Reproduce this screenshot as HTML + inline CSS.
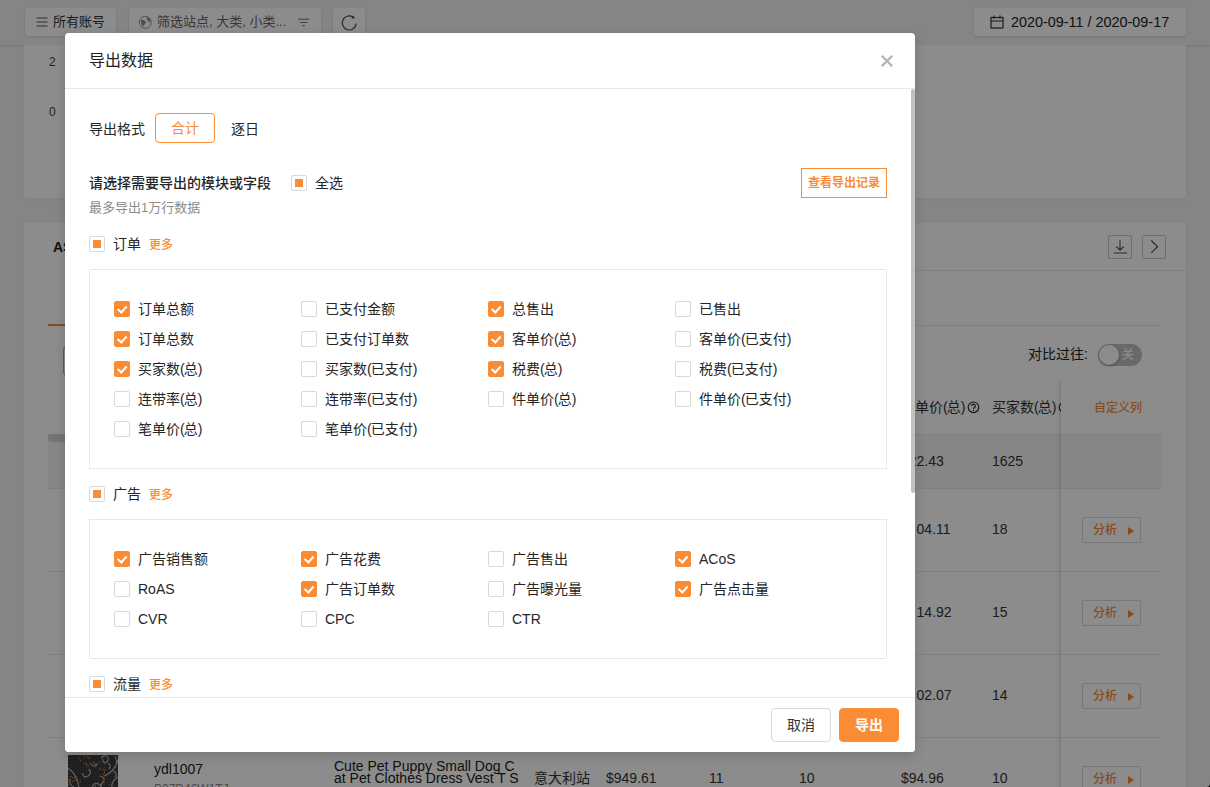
<!DOCTYPE html>
<html lang="zh-CN">
<head>
<meta charset="utf-8">
<title>导出数据</title>
<style>
*{box-sizing:border-box;margin:0;padding:0}
html,body{width:1210px;height:787px;overflow:hidden;background:#f0f2f5}
body{font-family:"Liberation Sans","Noto Sans CJK SC",sans-serif;font-size:14px;color:#333;position:relative;line-height:1}
.abs{position:absolute}
.t{position:absolute;white-space:nowrap;line-height:20px;height:20px}
/* background page */
#page{position:absolute;left:0;top:0;width:1210px;height:787px;overflow:hidden;background:#f0f2f5}
.topbar{position:absolute;left:0;top:0;width:1210px;height:45px;background:#f0f2f5;box-shadow:0 1px 2px rgba(0,0,0,.12)}
.btn{position:absolute;border-radius:3px;background:#fff;height:28px;line-height:28.5px;white-space:nowrap;font-size:13px;color:#333;box-shadow:0 1px 3px rgba(0,0,0,.12)}
.card{position:absolute;background:#fff;border-radius:2px;box-shadow:0 1px 3px rgba(0,0,0,.06)}
.hline{position:absolute;height:1px;background:#e8e8e8}
.ana{position:absolute;left:1082px;width:59px;height:26px;border:1px solid #d9d9d9;border-radius:2px;color:#f98a2f;font-size:12px;font-weight:500;line-height:24px;padding-left:10px;background:#fff}
.ana i{position:absolute;left:45px;top:8.5px;width:0;height:0;border-left:6px solid #f98a2f;border-top:4px solid transparent;border-bottom:4px solid transparent}
/* mask */
#mask{position:absolute;left:0;top:0;width:1210px;height:787px;background:rgba(0,0,0,.45)}
/* modal */
#modal{position:absolute;left:65px;top:33px;width:850px;height:719px;background:#fff;border-radius:4px;box-shadow:0 4px 12px rgba(0,0,0,.15);overflow:hidden}
#modal .t{color:#262626}
.cb{position:absolute;width:16px;height:16px;border:1px solid #d9d9d9;border-radius:2px;background:#fff}
.cb.on{background:#fa8c35;border-color:#fa8c35}
.cb.on:after{content:"";position:absolute;left:4.2px;top:1.8px;width:4.2px;height:7.4px;border:2px solid #fff;border-top:0;border-left:0;transform:rotate(42deg)}
.cb.ind:after{content:"";position:absolute;left:3px;top:3px;width:8px;height:8px;background:#fa8c35}
.pn{letter-spacing:-1px}
.more{color:#fa8c35;font-size:12px}
.box{position:absolute;left:24px;width:798px;border:1px solid #e8e8e8}
</style>
</head>
<body>
<div id="page">
<div class="topbar"></div>
<div class="btn" style="left:25px;top:8px;width:91px;padding-left:28px">所有账号<svg class="abs" style="left:11.400px;top:8.400px" width="12" height="12" viewBox="0 0 12 12"><path d="M0.5 2h11M0.5 6h11M0.5 10h11" stroke="#555" stroke-width="1" fill="none"/></svg></div>
<div class="btn" style="left:129px;top:8px;width:192px;padding-left:28px;color:#666">筛选站点, 大类, 小类...<svg class="abs" style="left:9px;top:7px" width="15" height="15" viewBox="0 0 15 15"><circle cx="7.300" cy="7.300" r="6" stroke="#999" stroke-width="1" fill="none"/><path d="M2.800 5.500c1.500-.8 3.500-.3 4.500.8s.5 2.200-.3 2.700-1.200 1.500-1.700 2.300C4 10.500 2.500 8 2.800 5.500z" fill="#8a8a8a"/><path d="M8.500 2c1.500.2 3.200 1.500 3.800 3.300-.3 1.400-.8 2.400-1.300 2.600-.3-1.800-1.500-2.300-2-3.500-.3-.8-.5-1.600-.5-2.400z" fill="#999"/><circle cx="6" cy="8.200" r=".8" fill="#fa8c35"/></svg><svg class="abs" style="left:169px;top:8px" width="12" height="12" viewBox="0 0 12 12"><path d="M0 3.200h11.300M2 6.500h7.500M4 9.600h3" stroke="#777" stroke-width="1" fill="none"/></svg></div>
<div class="btn" style="left:333px;top:8px;width:32px"><svg class="abs" style="left:7px;top:5.600px" width="18" height="18" viewBox="0 0 18 18"><path d="M16.200 9.600a7 7 0 1 1-3.200-6.500" stroke="#4a4a4a" stroke-width="1.200" fill="none"/><path d="M13.200 1.200l1.600 3.200-3.300.1z" fill="#4a4a4a"/></svg></div>
<div class="btn" style="left:974px;top:8px;width:212px;padding-left:37px;color:#222;font-size:14.400px">2020-09-11 / 2020-09-17<svg class="abs" style="left:16px;top:7px" width="14" height="14" viewBox="0 0 14 14"><rect x="1" y="2.500" width="12" height="10.500" stroke="#333" stroke-width="1.200" fill="none"/><path d="M1 6h12M4 0.500v3M10 0.500v3" stroke="#333" stroke-width="1.200" fill="none"/></svg></div>
<div class="card" style="left:24px;top:45px;width:1162px;height:153px"></div>
<div class="t" style="left:49px;top:52px;font-size:12px;color:#444">2</div>
<div class="t" style="left:49px;top:102px;font-size:12px;color:#444">0</div>
<div class="card" style="left:24px;top:223px;width:1162px;height:600px"></div>
<div class="t" style="left:53px;top:237px;font-weight:bold;font-size:14px;color:#222">ASIN</div>
<div class="hline" style="left:100px;top:270px;width:1085px"></div>
<div class="abs" style="left:1108px;top:235px;width:24px;height:24px;border:1px solid #c8c8c8;border-radius:2px"><svg width="22" height="22" viewBox="0 0 22 22"><path d="M11 4v10M7.300 10.500l3.700 3.700 3.700-3.700M4.500 17h13.500" stroke="#505050" stroke-width="1.100" fill="none"/></svg></div>
<div class="abs" style="left:1142px;top:235px;width:24px;height:24px;border:1px solid #c8c8c8;border-radius:2px"><svg width="22" height="22" viewBox="0 0 22 22"><path d="M8.300 4.500l6.200 6.200-6.200 6.200" stroke="#505050" stroke-width="1.200" fill="none"/></svg></div>
<div class="hline" style="left:48px;top:325px;width:1114px"></div>
<div class="abs" style="left:48px;top:324px;width:60px;height:2px;background:#fa8c35"></div>
<div class="abs" style="left:63px;top:346px;width:80px;height:30px;border:1px solid #fa8c35;border-radius:4px"></div>
<div class="t" style="left:1028px;top:344px;color:#222">对比过往:</div>
<div class="abs" style="left:1098px;top:344px;width:44px;height:22px;border-radius:11px;background:#bfbfbf"><span class="abs" style="left:1px;top:1px;width:20px;height:20px;border-radius:10px;background:#fff;box-shadow:0 1px 3px rgba(0,0,0,.3)"></span><span class="abs" style="left:24px;top:4px;font-size:12px;color:#fff;line-height:14px;font-weight:500">关</span></div>
<div class="abs" style="left:48px;top:434px;width:1114px;height:54px;background:#f5f5f5"></div>
<div class="hline" style="left:48px;top:434px;width:1114px"></div>
<div class="hline" style="left:48px;top:488px;width:1114px"></div>
<div class="hline" style="left:48px;top:571px;width:1114px"></div>
<div class="hline" style="left:48px;top:654px;width:1114px"></div>
<div class="hline" style="left:48px;top:737px;width:1114px"></div>
<div class="abs" style="left:48px;top:434px;width:60px;height:8px;background:#d4d4d4;border-radius:4px"></div>
<div class="t" style="left:901px;top:397px;color:#333">客单价<span class="pn">(</span>总<span class="pn">)</span></div>
<svg class="abs" style="left:967px;top:401px" width="13" height="13" viewBox="0 0 13 13"><circle cx="6.500" cy="6.300" r="5.300" stroke="#333" stroke-width="1.200" fill="none"/><path d="M4.700 5a1.800 1.800 0 1 1 2.600 1.600c-.6.300-.8.600-.8 1.300" stroke="#333" stroke-width="1.200" fill="none"/><circle cx="6.500" cy="9.500" r=".7" fill="#333"/></svg>
<div class="t" style="left:992px;top:397px;color:#333">买家数<span class="pn">(</span>总<span class="pn">)</span></div>
<svg class="abs" style="left:1058px;top:401px" width="13" height="13" viewBox="0 0 13 13"><circle cx="6.500" cy="6.300" r="5.300" stroke="#333" stroke-width="1.200" fill="none"/></svg>
<div class="t" style="left:901px;top:451px;">$22.43</div>
<div class="t" style="left:992px;top:451px;">1625</div>
<div class="t" style="left:901px;top:519px;width:13px;overflow:hidden">$1</div>
<div class="t" style="left:916.57px;top:519px;">04.11</div>
<div class="t" style="left:992px;top:519px;">18</div>
<div class="t" style="left:901px;top:602px;width:13px;overflow:hidden">$1</div>
<div class="t" style="left:916.57px;top:602px;">14.92</div>
<div class="t" style="left:992px;top:602px;">15</div>
<div class="t" style="left:901px;top:685px;width:13px;overflow:hidden">$1</div>
<div class="t" style="left:916.57px;top:685px;">02.07</div>
<div class="t" style="left:992px;top:685px;">14</div>
<div class="t" style="left:901px;top:768px;">$94.96</div>
<div class="t" style="left:992px;top:768px;">10</div>
<div class="abs" style="left:68px;top:755px;width:50px;height:40px;background:#353535"><svg width="50" height="40" viewBox="0 0 50 40"><defs><pattern id="dots" width="3" height="3" patternUnits="userSpaceOnUse"><rect x="0" y="0" width="1" height="1" fill="#555"/><rect x="1.500" y="1.500" width="1" height="1" fill="#4a4a4a"/></pattern></defs><rect width="50" height="40" fill="url(#dots)"/><g stroke="#adadad" stroke-width="1.250" fill="none"><path d="M0 13c6 4 10 10 11 20M33 3c3-4 8-2 7 2s-6 3-5-1M15 18c-1 3 2 5 5 3s3-5 1-7M50 5c-2 8-8 14-14 16M47 1c2 4 2 8 0 12M32 21c4 0 5 4 3 6s-3 8-2 13M24 32c3-6 10-4 9 3M50 22c-5 2-7 8-6 14M2 24c-1 4 1 7 4 8M45 16c3 0 4 4 2 6M22 8c2 3 5 4 7 2M40 8c2 1 3 4 1 6"/></g><g fill="#d0803a"><circle cx="16.200" cy="1.400" r=".7"/><circle cx="11.300" cy="3.400" r=".7"/><circle cx="12.300" cy="5.400" r=".7"/><circle cx="19.500" cy="2.300" r=".7"/><circle cx="20.500" cy="3.600" r=".7"/><circle cx="21.500" cy="2.300" r=".7"/><circle cx="16.300" cy="8.400" r=".7"/><circle cx="18.300" cy="8.400" r=".7"/><circle cx="19.300" cy="9.600" r=".7"/><circle cx="18.300" cy="10.600" r=".7"/><circle cx="20.300" cy="11.400" r=".7"/><circle cx="25.300" cy="7.300" r=".7"/><circle cx="26.500" cy="8.500" r=".7"/><circle cx="27.500" cy="9.500" r=".7"/><circle cx="28.500" cy="8.500" r=".7"/><circle cx="29.500" cy="9.500" r=".7"/><circle cx="31.500" cy="7.300" r=".7"/><circle cx="35.300" cy="7.300" r=".7"/><circle cx="36.500" cy="9.300" r=".7"/><circle cx="41.400" cy="10.400" r=".7"/><circle cx="32.400" cy="13.400" r=".7"/><circle cx="31.400" cy="14.500" r=".7"/><circle cx="35.400" cy="14.400" r=".7"/><circle cx="36.500" cy="15.500" r=".7"/><circle cx="37.500" cy="14.400" r=".7"/><circle cx="36.500" cy="17.500" r=".7"/><circle cx="35.500" cy="19.500" r=".7"/><circle cx="20.400" cy="15.400" r=".7"/><circle cx="22.400" cy="18.400" r=".7"/><circle cx="2.400" cy="21.400" r=".7"/><circle cx="4.400" cy="22.400" r=".7"/><circle cx="6.400" cy="22.400" r=".7"/><circle cx="8.400" cy="22.400" r=".7"/><circle cx="6.400" cy="25.400" r=".7"/><circle cx="8.400" cy="25.400" r=".7"/><circle cx="4.400" cy="26.400" r=".7"/><circle cx="12.400" cy="26.400" r=".7"/><circle cx="36.400" cy="27.400" r=".7"/><circle cx="41.400" cy="29.400" r=".7"/><circle cx="43.400" cy="29.400" r=".7"/><circle cx="44.400" cy="27.400" r=".7"/><circle cx="0.600" cy="29.400" r=".7"/><circle cx="10.400" cy="30.400" r=".7"/><circle cx="27.400" cy="31.400" r=".7"/></g></svg></div>
<div class="t" style="left:154px;top:759px;color:#222">ydl1007</div>
<div class="t" style="left:154px;top:779px;font-size:12px;color:#888">B07D46W1TJ</div>
<div class="t" style="left:334px;top:758.5px;color:#222;line-height:14px">Cute Pet Puppy Small Dog C</div>
<div class="t" style="left:334px;top:771px;color:#222;line-height:14px">at Pet Clothes Dress Vest T S</div>
<div class="t" style="left:534px;top:768px;">意大利站</div>
<div class="t" style="left:606px;top:768px;">$949.61</div>
<div class="t" style="left:709px;top:768px;">11</div>
<div class="t" style="left:799px;top:768px;">10</div>
<div class="abs" style="left:1056px;top:381px;width:5px;height:420px;background:linear-gradient(to right,rgba(0,0,0,0),rgba(0,0,0,.1))"></div><div class="abs" style="left:1061px;top:381px;width:101px;height:420px;background:#fff"></div>
<div class="abs" style="left:1061px;top:435px;width:101px;height:53px;background:#f5f5f5"></div>
<div class="hline" style="left:1061px;top:434px;width:101px"></div>
<div class="hline" style="left:1061px;top:488px;width:101px"></div>
<div class="hline" style="left:1061px;top:571px;width:101px"></div>
<div class="hline" style="left:1061px;top:654px;width:101px"></div>
<div class="hline" style="left:1061px;top:737px;width:101px"></div>
<div class="t" style="left:1094px;top:398px;font-size:12px;color:#fa8c35;font-weight:500">自定义列</div>
<div class="ana" style="top:517px">分析<i></i></div>
<div class="ana" style="top:600px">分析<i></i></div>
<div class="ana" style="top:683px">分析<i></i></div>
<div class="ana" style="top:766px">分析<i></i></div>
<svg class="abs" style="left:1204px;top:781px" width="6" height="6" viewBox="0 0 6 6"><path d="M6 2.500A3.500 3.500 0 0 1 2.500 6H6z" fill="#000"/></svg>
</div>
<div id="mask"></div>
<div id="modal">
<div class="t" style="left:24px;top:18px;font-size:16px;color:#222;">导出数据</div>
<div class="abs" style="left:814px;top:20px;width:16px;height:16px"><svg width="16" height="16" viewBox="0 0 16 16"><path d="M2.800 2.800l10.400 10.400M13.200 2.800l-10.400 10.400" stroke="#b3b3b3" stroke-width="2.200" fill="none"/></svg></div>
<div class="hline" style="left:0;top:55px;width:850px"></div>
<div class="t" style="left:24px;top:86px;">导出格式</div>
<div class="abs" style="left:90px;top:80px;width:60px;height:30px;border:1px solid #fa8c35;border-radius:4px;color:#fa8c35;text-align:center;line-height:29.5px;font-size:14px">合计</div>
<div class="t" style="left:166px;top:86px;">逐日</div>
<div class="t" style="left:24px;top:140px;font-weight:500">请选择需要导出的模块或字段</div>
<span class="cb ind" style="left:226px;top:142px"></span>
<div class="t" style="left:250px;top:140px;">全选</div>
<div class="abs" style="left:736px;top:135px;width:86px;height:30px;border:1px solid #fa8c35;color:#fa8c35;text-align:center;line-height:28px;font-size:12px;font-weight:bold">查看导出记录</div>
<div class="t" style="left:24px;top:165px;font-size:13px;color:#8c8c8c">最多导出1万行数据</div>
<span class="cb ind" style="left:24px;top:203px"></span>
<div class="t" style="left:48px;top:201px;">订单</div>
<div class="t" style="left:84px;top:202px;font-size:12px;color:#fa8c35;font-weight:500">更多</div>
<div class="box" style="top:236px;height:200px"></div>
<span class="cb on" style="left:49px;top:268px"></span>
<div class="t" style="left:73px;top:266px;">订单总额</div>
<span class="cb " style="left:236px;top:268px"></span>
<div class="t" style="left:260px;top:266px;">已支付金额</div>
<span class="cb on" style="left:423px;top:268px"></span>
<div class="t" style="left:447px;top:266px;">总售出</div>
<span class="cb " style="left:610px;top:268px"></span>
<div class="t" style="left:634px;top:266px;">已售出</div>
<span class="cb on" style="left:49px;top:298px"></span>
<div class="t" style="left:73px;top:296px;">订单总数</div>
<span class="cb " style="left:236px;top:298px"></span>
<div class="t" style="left:260px;top:296px;">已支付订单数</div>
<span class="cb on" style="left:423px;top:298px"></span>
<div class="t" style="left:447px;top:296px;">客单价<span class="pn">(</span>总<span class="pn">)</span></div>
<span class="cb " style="left:610px;top:298px"></span>
<div class="t" style="left:634px;top:296px;">客单价<span class="pn">(</span>已支付<span class="pn">)</span></div>
<span class="cb on" style="left:49px;top:328px"></span>
<div class="t" style="left:73px;top:326px;">买家数<span class="pn">(</span>总<span class="pn">)</span></div>
<span class="cb " style="left:236px;top:328px"></span>
<div class="t" style="left:260px;top:326px;">买家数<span class="pn">(</span>已支付<span class="pn">)</span></div>
<span class="cb on" style="left:423px;top:328px"></span>
<div class="t" style="left:447px;top:326px;">税费<span class="pn">(</span>总<span class="pn">)</span></div>
<span class="cb " style="left:610px;top:328px"></span>
<div class="t" style="left:634px;top:326px;">税费<span class="pn">(</span>已支付<span class="pn">)</span></div>
<span class="cb " style="left:49px;top:358px"></span>
<div class="t" style="left:73px;top:356px;">连带率<span class="pn">(</span>总<span class="pn">)</span></div>
<span class="cb " style="left:236px;top:358px"></span>
<div class="t" style="left:260px;top:356px;">连带率<span class="pn">(</span>已支付<span class="pn">)</span></div>
<span class="cb " style="left:423px;top:358px"></span>
<div class="t" style="left:447px;top:356px;">件单价<span class="pn">(</span>总<span class="pn">)</span></div>
<span class="cb " style="left:610px;top:358px"></span>
<div class="t" style="left:634px;top:356px;">件单价<span class="pn">(</span>已支付<span class="pn">)</span></div>
<span class="cb " style="left:49px;top:388px"></span>
<div class="t" style="left:73px;top:386px;">笔单价<span class="pn">(</span>总<span class="pn">)</span></div>
<span class="cb " style="left:236px;top:388px"></span>
<div class="t" style="left:260px;top:386px;">笔单价<span class="pn">(</span>已支付<span class="pn">)</span></div>
<span class="cb ind" style="left:24px;top:453px"></span>
<div class="t" style="left:48px;top:451px;">广告</div>
<div class="t" style="left:84px;top:452px;font-size:12px;color:#fa8c35;font-weight:500">更多</div>
<div class="box" style="top:486px;height:140px"></div>
<span class="cb on" style="left:49px;top:518px"></span>
<div class="t" style="left:73px;top:516px;">广告销售额</div>
<span class="cb on" style="left:236px;top:518px"></span>
<div class="t" style="left:260px;top:516px;">广告花费</div>
<span class="cb " style="left:423px;top:518px"></span>
<div class="t" style="left:447px;top:516px;">广告售出</div>
<span class="cb on" style="left:610px;top:518px"></span>
<div class="t" style="left:634px;top:516px;">ACoS</div>
<span class="cb " style="left:49px;top:548px"></span>
<div class="t" style="left:73px;top:546px;">RoAS</div>
<span class="cb on" style="left:236px;top:548px"></span>
<div class="t" style="left:260px;top:546px;">广告订单数</div>
<span class="cb " style="left:423px;top:548px"></span>
<div class="t" style="left:447px;top:546px;">广告曝光量</div>
<span class="cb on" style="left:610px;top:548px"></span>
<div class="t" style="left:634px;top:546px;">广告点击量</div>
<span class="cb " style="left:49px;top:578px"></span>
<div class="t" style="left:73px;top:576px;">CVR</div>
<span class="cb " style="left:236px;top:578px"></span>
<div class="t" style="left:260px;top:576px;">CPC</div>
<span class="cb " style="left:423px;top:578px"></span>
<div class="t" style="left:447px;top:576px;">CTR</div>
<span class="cb ind" style="left:24px;top:643px"></span>
<div class="t" style="left:48px;top:641px;">流量</div>
<div class="t" style="left:84px;top:642px;font-size:12px;color:#fa8c35;font-weight:500">更多</div>
<div class="box" style="top:676px;height:140px"></div>
<div class="abs" style="left:0;top:664px;width:850px;height:55px;background:#fff;border-top:1px solid #e8e8e8"></div>
<div class="abs" style="left:706px;top:675px;width:60px;height:34px;border:1px solid #d9d9d9;border-radius:4px;color:#333;text-align:center;line-height:32px;font-size:14px;background:#fff">取消</div>
<div class="abs" style="left:774px;top:675px;width:60px;height:34px;border:1px solid #fa8c35;border-radius:4px;color:#fff;text-align:center;line-height:32px;font-size:14px;background:#fa8c35;font-weight:bold">导出</div>
<div class="abs" style="left:846px;top:56px;width:4px;height:404px;background:#c1c1c1;border-radius:2px"></div>
</div>
</body>
</html>
